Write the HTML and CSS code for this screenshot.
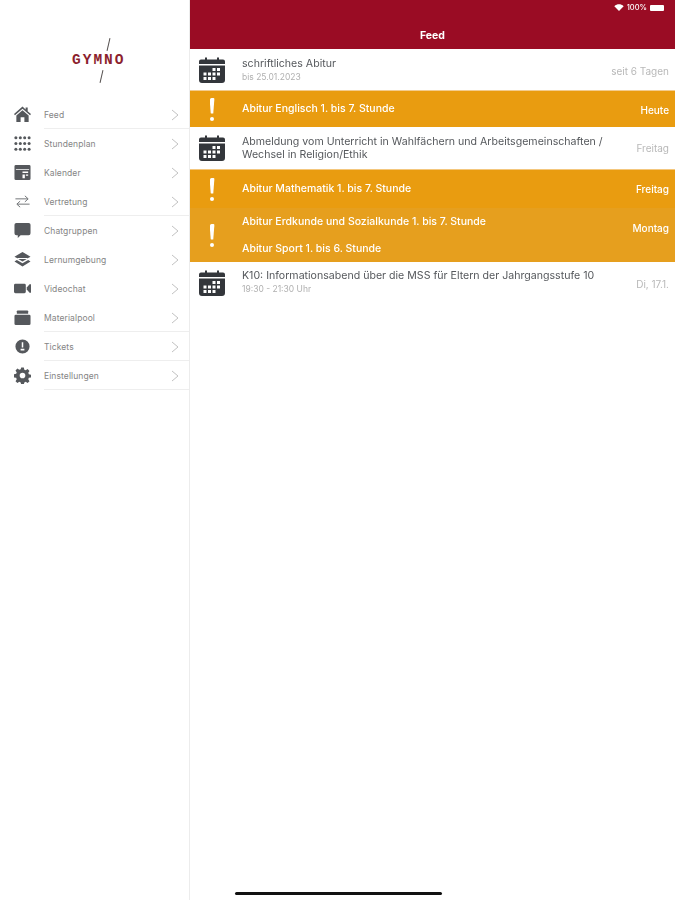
FILE: index.html
```html
<!DOCTYPE html>
<html lang="de">
<head>
<meta charset="utf-8">
<title>Gymno Feed</title>
<link rel="stylesheet" href="styles.css">
</head>
<body>
<svg class="defs" width="0" height="0" aria-hidden="true">
  <symbol id="cal" viewBox="0 0 28 28">
    <path fill="#33363b" d="M1 8V5.500A2 2 0 0 1 3 3.500h4V1.500h2v2h10v-2h2v2h4a2 2 0 0 1 2 2V8z"/>
    <path fill="#33363b" fill-rule="evenodd" d="M1 9.500h26V24a3 3 0 0 1-3 3H4a3 3 0 0 1-3-3zM14.500 12v3h3v-3zM19 12v3h3v-3zM5.500 16.500v3h3v-3zM10 16.500v3h3v-3zM14.500 16.500v3h3v-3zM19 16.500v3h3v-3zM5.500 21v3h3v-3zM10 21v3h3v-3zM14.500 21v3h3v-3z"/>
  </symbol>
  <symbol id="chev" viewBox="0 0 8 12">
    <path d="M1 1l6 5-6 5" fill="none" stroke="#c2c2c2" stroke-width="1"/>
  </symbol>
</svg>
<div class="app">
  <aside class="sidebar">
    <div class="logo">
      <span class="logo-slash logo-slash-top"></span>
      <span class="logo-text">GYMNO</span>
      <span class="logo-slash logo-slash-bottom"></span>
    </div>
    <nav class="menu">
      <a class="item sep">
        <svg class="ico" viewBox="0 0 18 18"><path d="M9 .5L0 8.500l1 1.200L9 3l8 6.700 1-1.200-3.500-3V1.500h-2.200v2.200z"/><path d="M9 4.500l-6.500 5.600V17h4.500v-5h4v5h4.500v-6.900z"/></svg>
        <span class="label">Feed</span><svg class="chev"><use href="#chev"/></svg>
      </a>
      <a class="item">
        <svg class="ico" viewBox="0 0 18 18"><circle cx="2" cy="3" r="1.600"/><circle cx="6.700" cy="3" r="1.600"/><circle cx="11.300" cy="3" r="1.600"/><circle cx="16" cy="3" r="1.600"/><circle cx="2" cy="9" r="1.600"/><circle cx="6.700" cy="9" r="1.600"/><circle cx="11.300" cy="9" r="1.600"/><circle cx="16" cy="9" r="1.600"/><circle cx="2" cy="15" r="1.600"/><circle cx="6.700" cy="15" r="1.600"/><circle cx="11.300" cy="15" r="1.600"/><circle cx="16" cy="15" r="1.600"/></svg>
        <span class="label">Stundenplan</span><svg class="chev"><use href="#chev"/></svg>
      </a>
      <a class="item">
        <svg class="ico" viewBox="0 0 18 18"><path fill-rule="evenodd" d="M2 1h14a1.500 1.500 0 0 1 1.500 1.500v13A1.500 1.500 0 0 1 16 17H2A1.500 1.500 0 0 1 .5 15.500v-13A1.500 1.500 0 0 1 2 1zM2 5.500v.8h14v-.8zM9 8v1.500h6V8zM9 11v4h2.500v-4zM12.500 11v1.500H15V11z"/></svg>
        <span class="label">Kalender</span><svg class="chev"><use href="#chev"/></svg>
      </a>
      <a class="item sep">
        <svg class="ico" viewBox="0 0 18 18"><path d="M1.500 6.200h13M11.500 3l3.500 3.200-3.500 3.200M16.500 11.800h-13M6.500 8.600L3 11.800 6.500 15" fill="none" stroke="#6b6e72" stroke-width="1"/></svg>
        <span class="label">Vertretung</span><svg class="chev"><use href="#chev"/></svg>
      </a>
      <a class="item">
        <svg class="ico" viewBox="0 0 18 18"><path d="M2.500 1h13a2 2 0 0 1 2 2v9a2 2 0 0 1-2 2H7l-3 3v-3H2.500a2 2 0 0 1-2-2V3a2 2 0 0 1 2-2z"/></svg>
        <span class="label">Chatgruppen</span><svg class="chev"><use href="#chev"/></svg>
      </a>
      <a class="item">
        <svg class="ico" viewBox="0 0 18 18"><path d="M9 1L.5 6 4 8v-.5h10V8l3.500-2z"/><path d="M4.500 8.500h9L9 11z"/><path d="M3 9.500L.5 11 9 16.500l8.500-5.500-2.500-1.500L9 13z"/></svg>
        <span class="label">Lernumgebung</span><svg class="chev"><use href="#chev"/></svg>
      </a>
      <a class="item">
        <svg class="ico" viewBox="0 0 18 18"><path d="M1.500 4h9.500a1.500 1.500 0 0 1 1.500 1.500v7A1.500 1.500 0 0 1 11 14H1.500A1.500 1.500 0 0 1 0 12.500v-7A1.500 1.500 0 0 1 1.500 4z"/><path d="M13.500 8l3-3.500h1.500v9h-1.500l-3-3.500z"/></svg>
        <span class="label">Videochat</span><svg class="chev"><use href="#chev"/></svg>
      </a>
      <a class="item sep">
        <svg class="ico" viewBox="0 0 18 18"><path d="M4 1.500h10a1 1 0 0 1 1 1V5H3V2.500a1 1 0 0 1 1-1z"/><path d="M2 6h14a1.500 1.500 0 0 1 1.500 1.500v8A1.500 1.500 0 0 1 16 17H2a1.500 1.500 0 0 1-1.500-1.500v-8A1.500 1.500 0 0 1 2 6z"/></svg>
        <span class="label">Materialpool</span><svg class="chev"><use href="#chev"/></svg>
      </a>
      <a class="item sep">
        <svg class="ico" viewBox="0 0 18 18"><path fill-rule="evenodd" d="M9 1.500a7.500 7.500 0 1 1 0 15 7.500 7.500 0 0 1 0-15zM8.200 4.500V10h1.600V4.500zM7 11.500v1.800h4v-1.800z"/></svg>
        <span class="label">Tickets</span><svg class="chev"><use href="#chev"/></svg>
      </a>
      <a class="item sep">
        <svg class="ico" viewBox="0 0 18 18"><path fill-rule="evenodd" d="M7.600.5h2.800l.5 2.400 1.500.6 2-1.300 2 2-1.300 2 .6 1.500 2.400.5v2.800l-2.400.5-.6 1.500 1.300 2-2 2-2-1.300-1.500.6-.5 2.400H7.600l-.5-2.400-1.500-.6-2 1.300-2-2 1.300-2-.6-1.500-2.400-.5V7.700l2.400-.5.6-1.500-1.300-2 2-2 2 1.300 1.500-.6zM9 6a3 3 0 1 0 0 6 3 3 0 0 0 0-6z"/></svg>
        <span class="label">Einstellungen</span><svg class="chev"><use href="#chev"/></svg>
      </a>
    </nav>
  </aside>
  <main class="main">
    <header class="topbar">
      <div class="status">
        <svg class="wifi" viewBox="0 0 12 9"><path d="M6 9L0 2.800C3.500-.6 8.500-.6 12 2.800z"/></svg>
        <span class="pct">100%</span>
        <span class="battery"></span>
      </div>
      <h1 class="title">Feed</h1>
    </header>
    <section class="feed">
      <div class="row row-first">
        <svg class="cal"><use href="#cal"/></svg>
        <div class="body"><div class="text">schriftliches Abitur</div><div class="sub">bis 25.01.2023</div></div>
        <div class="when when-down">seit 6 Tagen</div>
      </div>
      <div class="row alert alert-a">
        <div class="bang"></div>
        <div class="body body-up"><div class="text">Abitur Englisch 1. bis 7. Stunde</div></div>
        <div class="when when-down">Heute</div>
      </div>
      <div class="row row-two">
        <svg class="cal"><use href="#cal"/></svg>
        <div class="body"><div class="text">Abmeldung vom Unterricht in Wahlfächern und Arbeitsgemeinschaften /<br>Wechsel in Religion/Ethik</div></div>
        <div class="when">Freitag</div>
      </div>
      <div class="row alert alert-b">
        <div class="bang"></div>
        <div class="body body-up"><div class="text">Abitur Mathematik 1. bis 7. Stunde</div></div>
        <div class="when">Freitag</div>
      </div>
      <div class="row alert alert-c">
        <div class="bang"></div>
        <div class="body body-gap"><div class="text">Abitur Erdkunde und Sozialkunde 1. bis 7. Stunde</div><div class="text">Abitur Sport 1. bis 6. Stunde</div></div>
        <div class="when when-up">Montag</div>
      </div>
      <div class="row row-last">
        <svg class="cal"><use href="#cal"/></svg>
        <div class="body body-up"><div class="text">K10: Informationsabend über die MSS für Eltern der Jahrgangsstufe 10</div><div class="sub">19:30 - 21:30 Uhr</div></div>
        <div class="when when-down">Di, 17.1.</div>
      </div>
    </section>
    <div class="home-bar"></div>
  </main>
</div>
</body>
</html>
```

FILE: styles.css
```css
* { box-sizing: border-box; }
html, body { margin: 0; height: 100%; }
body { font-family: Inter, "Liberation Sans", sans-serif; background: #fff; color: #55585c; }
.defs { position: absolute; }
.app { display: flex; width: 675px; height: 900px; overflow: hidden; filter: blur(0.7px); }

.sidebar { width: 190px; flex: none; border-right: 1px solid #ececec; background: #fff; }
.logo { height: 100px; position: relative; }
.logo-text { position: absolute; top: 52px; left: 72px; font: 700 14.5px/16px "Liberation Mono", monospace; letter-spacing: 2px; color: #8c1f2e; }
.logo-slash { position: absolute; width: 1.3px; background: #55504f; transform: rotate(13deg); }
.logo-slash-top { left: 108px; top: 38px; height: 13px; }
.logo-slash-bottom { left: 100.500px; top: 70px; height: 13px; }

.menu { display: flex; flex-direction: column; }
.item { height: 29px; display: flex; align-items: center; padding-left: 14px; position: relative; }
.item.sep::after { content: ""; position: absolute; left: 44px; right: 0; bottom: 0; height: 1px; background: #eeeeee; }
.ico { width: 17px; height: 17px; flex: none; fill: #55585c; }
.label { margin-left: 13px; flex: 1; font: 400 8.500px/12px Inter, sans-serif; letter-spacing: .1px; color: #858585; }
.chev { width: 8px; height: 12px; margin-right: 10px; flex: none; }

.main { flex: 1; position: relative; min-width: 0; }
.topbar { height: 49px; background: #9a0c24; position: relative; color: #fff; }
.status { position: absolute; top: 3px; right: 0; height: 9px; display: flex; align-items: center; gap: 3px; padding-right: 11px; }
.wifi { width: 10px; height: 7px; fill: #fff; }
.pct { font-size: 7.500px; font-weight: 500; line-height: 9px; }
.battery { width: 14px; height: 6px; background: #fff; border-radius: 1px; }
.title { margin: 0; position: absolute; left: 0; right: 0; top: 29px; text-align: center; font-size: 10.500px; line-height: 13px; font-weight: 700; }

.feed { display: flex; flex-direction: column; }
.row { display: flex; align-items: center; background: #fff; }
.row-first { height: 41px; }
.row-two { height: 42px; }
.row-last { height: 41px; }
.alert { color: #fff; border-top: 1px solid #f3cc8f; }
.alert-a { height: 37px; background: #e99c10; }
.alert-b { height: 39px; background: #e99c10; border-top-color: #f4c77d; }
.alert-c { height: 54px; background: #e69f1e; border-top: 0; }
.cal { width: 28px; height: 28px; margin-left: 8px; flex: none; }
.bang { width: 28px; height: 23px; margin-left: 8px; flex: none; position: relative; }
.bang::before { content: ""; position: absolute; left: 11.500px; top: 0; width: 5px; height: 16px; background: #fff; border-radius: 1.500px; clip-path: polygon(0 0, 100% 0, 75% 100%, 25% 100%); }
.bang::after { content: ""; position: absolute; left: 12px; top: 19px; width: 4px; height: 4px; background: #fff; border-radius: 50%; }
.body { flex: 1; margin-left: 16px; min-width: 0; }
.body-gap { display: flex; flex-direction: column; gap: 14px; }
.body-up { margin-bottom: 2px; }
.text { font-size: 10.600px; line-height: 13px; white-space: nowrap; color: #55585c; }
.alert .text { color: #fff; font-weight: 500; font-size: 10.500px; }
.sub { font-size: 8.500px; line-height: 11px; margin-top: 2px; color: #b0b0b0; }
.when { font-size: 10px; line-height: 12px; color: #b8b8b8; padding-right: 6px; white-space: nowrap; }
.when-down { margin-top: 2px; }
.when-up { margin-bottom: 14px; }
.alert .when { color: #fff; font-weight: 500; }
.home-bar { position: absolute; left: 45px; top: 892px; width: 207px; height: 3px; background: #111; border-radius: 2px; }
```
